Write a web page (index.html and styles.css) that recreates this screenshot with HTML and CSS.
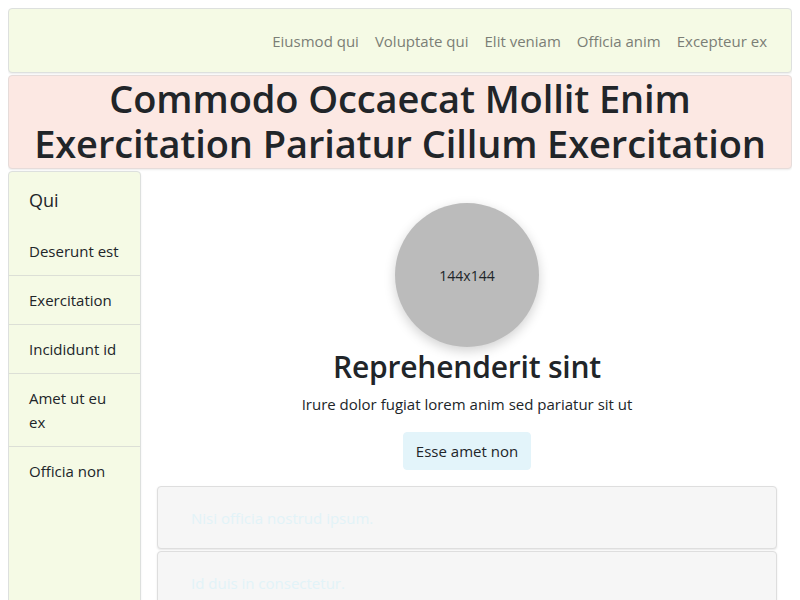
FILE: index.html
```html
<!DOCTYPE html>
<html>
<head>
<meta charset="utf-8">
<link rel="stylesheet" href="styles.css">
</head>
<body>
<nav class="navbar">
  <a class="nav-link" href="#">Eiusmod qui</a>
  <a class="nav-link" href="#">Voluptate qui</a>
  <a class="nav-link" href="#">Elit veniam</a>
  <a class="nav-link" href="#">Officia anim</a>
  <a class="nav-link" href="#">Excepteur ex</a>
</nav>
<header class="hero">
  <h1 class="hero-title">Commodo Occaecat Mollit Enim Exercitation Pariatur Cillum Exercitation</h1>
</header>
<div class="layout">
  <aside class="sidebar">
    <div class="sidebar-head">Qui</div>
    <div class="sidebar-item">Deserunt est</div>
    <div class="sidebar-item">Exercitation</div>
    <div class="sidebar-item">Incididunt id</div>
    <div class="sidebar-item">Amet ut eu ex</div>
    <div class="sidebar-item last">Officia non</div>
  </aside>
  <main class="main">
    <div class="avatar">144x144</div>
    <h2 class="title">Reprehenderit sint</h2>
    <p class="lead">Irure dolor fugiat lorem anim sed pariatur sit ut</p>
    <button class="btn">Esse amet non</button>
    <div class="cards">
      <div class="card">Nisi officia nostrud ipsum.</div>
      <div class="card">Id duis in consectetur.</div>
    </div>
  </main>
</div>
</body>
</html>
```
FILE: styles.css
```css
* { box-sizing: border-box; }
html, body { height: 100%; }
body {
  margin: 8px;
  font-family: "Open Sans", "Noto Sans", sans-serif;
  color: #212529;
  background: #fff;
  display: flex;
  flex-direction: column;
  overflow: hidden;
}
.navbar {
  height: 65px;
  background: #f5fae5;
  border: 1px solid #dde0de;
  border-radius: 4px;
  box-shadow: 0 1px 2px rgba(0,0,0,0.08);
  display: flex;
  justify-content: flex-end;
  align-items: center;
  padding: 0 16px;
  flex-shrink: 0;
}
.nav-link {
  color: #7b7e76;
  text-decoration: none;
  font-size: 15px;
  padding: 0 8px;
}
.hero {
  margin-top: 2px;
  background: #fce8e3;
  border: 1px solid #e6dcda;
  border-radius: 4px;
  box-shadow: 0 1px 2px rgba(0,0,0,0.08);
  padding: 0 12px 2px;
  flex-shrink: 0;
}
.hero-title {
  margin: 0;
  text-align: center;
  font-size: 38px;
  line-height: 45px;
  font-weight: 600;
  letter-spacing: -0.1px;
}
.layout {
  margin-top: 2px;
  display: flex;
  flex: 1;
  min-height: 0;
}
.sidebar {
  width: 133px;
  flex-shrink: 0;
  background: #f5fae5;
  border: 1px solid #dde0de;
  border-radius: 4px 4px 0 0;
  box-shadow: 0 1px 2px rgba(0,0,0,0.08);
  font-size: 15px;
}
.sidebar-head {
  font-size: 18px;
  line-height: 24px;
  padding: 16px 20px 15px;
}
.sidebar-item {
  padding: 12px 20px;
  line-height: 24px;
  border-bottom: 1px solid #dcdfd6;
}
.sidebar-item.last { border-bottom: none; }
.main {
  flex: 1;
  padding: 32px 15px 0 16px;
  display: flex;
  flex-direction: column;
  align-items: center;
}
.avatar {
  width: 144px;
  height: 144px;
  border-radius: 50%;
  background: #bbbbbb;
  box-shadow: 0 4px 12px rgba(0,0,0,0.18);
  display: flex;
  align-items: center;
  justify-content: center;
  font-size: 14px;
  flex-shrink: 0;
}
.title {
  margin: 0;
  font-size: 30px;
  line-height: 40px;
  font-weight: 600;
  letter-spacing: -0.2px;
}
.lead {
  margin: 6px 0 0;
  font-size: 15px;
  line-height: 22px;
}
.btn {
  margin-top: 17px;
  font-family: inherit;
  font-size: 15px;
  line-height: 24px;
  color: #212529;
  background: #e3f4fa;
  border: 1px solid #e3f4fa;
  border-radius: 4px;
  padding: 6px 12px;
}
.cards {
  margin-top: 16px;
  align-self: stretch;
  display: flex;
  flex-direction: column;
  gap: 2px;
}
.card {
  background: #f6f6f6;
  border: 1px solid #dedede;
  border-radius: 4px;
  box-shadow: 0 1px 2px rgba(0,0,0,0.1);
  padding: 19px 33px 18px;
  font-size: 15px;
  line-height: 24px;
  color: #e2f3f8;
}
```
